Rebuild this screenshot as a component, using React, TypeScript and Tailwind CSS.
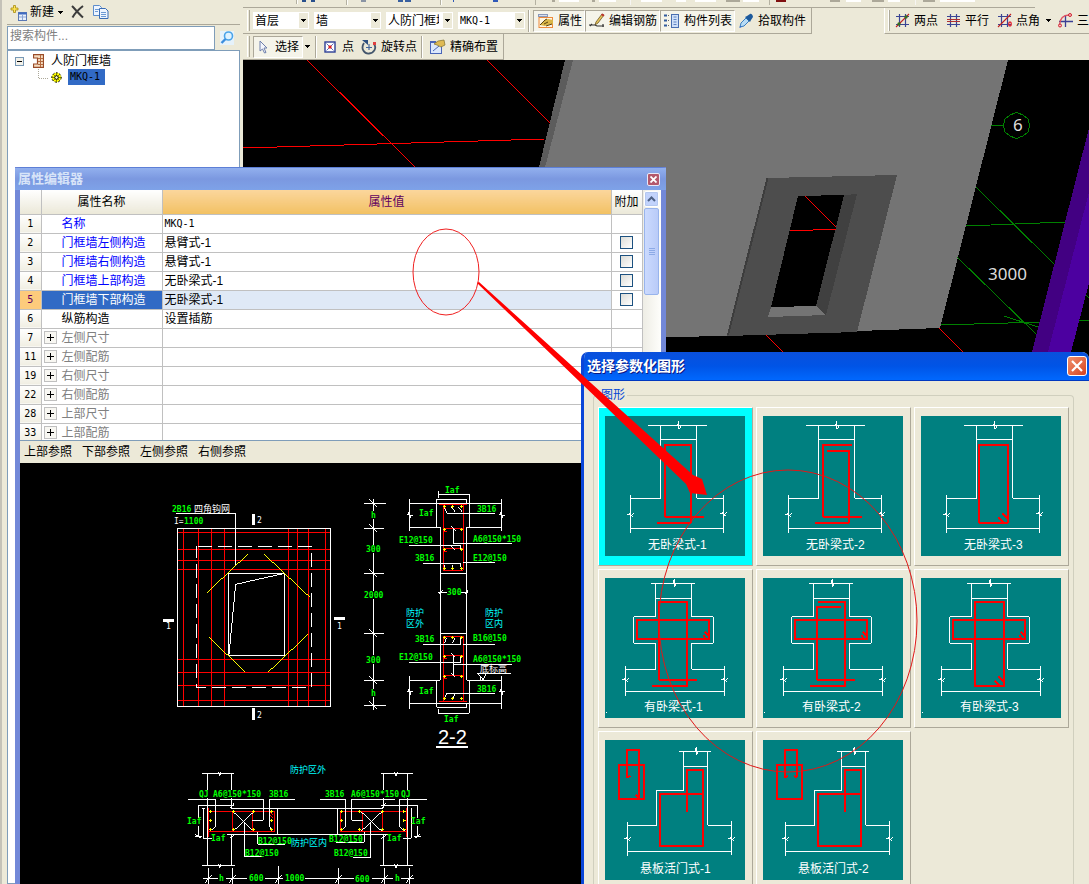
import React from "react";

type LabelSpec = [number, number, string, string?, number?];

const G = "#00ff00";
const W = "#ffffff";
const C = "#00ffff";

function DownArrow({ className = "" }: { className?: string }) {
  return (
    <svg className={className} width="5" height="3" viewBox="0 0 5 3" shapeRendering="crispEdges" aria-hidden="true">
      <path d="M0 0h5L2.5 3z" fill="#000" />
    </svg>
  );
}

function Combo({ label, value, width }: { label: string; value: string; width: string }) {
  const latin = /^[\x00-\x7f]+$/.test(value);
  return (
    <div className={`relative h-[17px] bg-white ${width}`}>
      <select
        aria-label={label}
        className={`h-[17px] w-full appearance-none overflow-hidden bg-transparent pr-[14px] pl-[2px] text-clip outline-none ${
          latin ? "font-['DejaVu_Sans_Mono'] text-[10px]" : "text-[12px] leading-[16px]"
        }`}
      >
        <option>{value}</option>
      </select>
      <div className="pointer-events-none absolute top-[1px] right-[1px] flex h-[15px] w-[9px] items-center justify-center bg-[#ece9d8]">
        <DownArrow />
      </div>
    </div>
  );
}

function Grip() {
  return <div className="mr-[3px] h-full w-[3px] border-r border-l border-r-[#aca899] border-l-white" />;
}

function Sep() {
  return <div className="mx-[3px] h-[22px] w-[2px] border-r border-l border-r-white border-l-[#aca899]" />;
}

function ToolButton({
  children,
  pressed = false,
  className = "",
}: {
  children: React.ReactNode;
  pressed?: boolean;
  className?: string;
}) {
  return (
    <button
      type="button"
      aria-pressed={pressed}
      className={`flex h-[22px] items-center gap-[4px] border whitespace-nowrap ${
        pressed
          ? "border-t-[#aca899] border-r-white border-b-white border-l-[#aca899] bg-[#f5f4ea]"
          : "border-transparent"
      } ${className}`}
    >
      {children}
    </button>
  );
}

function PropertyIcon() {
  return (
    <svg width="16" height="16" viewBox="0 0 16 16" aria-hidden="true">
      <rect x="0.5" y="1.5" width="9" height="2" fill="#d8e0f0" stroke="#8a98b8" />
      <rect x="1" y="4.5" width="13.5" height="10" fill="#fff6e0" stroke="#ee8a3c" />
      <path d="M2 12l5-5 3-1 5 1v4l-5 1-3 1z" fill="#d9b648" />
      <path d="M2 12l5-5 2-1M6 11l4-2M8 13l6-2" stroke="#5a4310" fill="none" />
    </svg>
  );
}

function PencilIcon() {
  return (
    <svg width="16" height="16" viewBox="0 0 16 16" aria-hidden="true">
      <path d="M7 9l6-8 2 1-6 8-3 2z" fill="#e8c65a" stroke="#6a5424" strokeWidth="0.8" />
      <path d="M12 2l1-1.500 2.500 1.500-1 1.500z" fill="#c03030" />
      <path d="M0 12h6l2 1h7M1 13l2-2M14 11v3" stroke="#333" fill="none" strokeWidth="1.200" />
    </svg>
  );
}

function ListIcon() {
  return (
    <svg width="16" height="16" viewBox="0 0 16 16" aria-hidden="true">
      <path d="M0 2.500h3M0 7.500h3M0 12.500h3" stroke="#315a9c" strokeWidth="2" />
      <path d="M4 2.500h2M4 7.500h2M4 12.500h2" stroke="#666" strokeDasharray="1 1" />
      <rect x="7.500" y="1.500" width="7" height="13" fill="#cfe0f8" stroke="#4a6fb0" />
      <path d="M9.500 4h3M9.500 6.500h3M9.500 9h3M9.500 11.500h3" stroke="#5f84c4" />
    </svg>
  );
}

function DropperIcon() {
  return (
    <svg width="16" height="16" viewBox="0 0 16 16" aria-hidden="true">
      <path d="M2 14l1-4 5-5 3 3-5 5z" fill="#b7dcf5" stroke="#3b7fc0" />
      <path d="M7 4l5 5 1-2 2-3c0-2-2-4-3-3L9 3z" fill="#1d5a9c" />
      <path d="M1 15l1.500-2 1 1z" fill="#2a5fd0" />
    </svg>
  );
}

function AxisIcon({ kind }: { kind: "two" | "parallel" | "angle" | "three" }) {
  if (kind === "three") {
    return (
      <svg width="15" height="15" viewBox="0 0 15 15" aria-hidden="true">
        <path d="M7.500 2v12M1 8.500h14" stroke="#3a3f94" strokeWidth="1.300" />
        <path d="M1.500 12C2 5 5 2 11 2" stroke="#e05060" fill="none" strokeWidth="1.300" />
        <circle cx="2" cy="12.500" r="1.500" fill="#f6c0c0" stroke="#d02030" />
        <circle cx="12" cy="2" r="1.500" fill="#f6c0c0" stroke="#d02030" />
      </svg>
    );
  }
  return (
    <svg width="15" height="15" viewBox="0 0 15 15" aria-hidden="true">
      <path d="M4.500 1v13M10.500 1v13M1 3.500h13M1 11.500h13" stroke="#3a4494" strokeWidth="1.200" />
      {kind === "parallel" && <path d="M1 6.500h13M1 8.500h13" stroke="#b03030" />}
      {kind !== "parallel" && <path d="M1 14L14 1" stroke="#c02020" strokeWidth="1.100" />}
      {kind === "two" && (
        <>
          <circle cx="4" cy="11" r="1.700" fill="#356f20" />
          <circle cx="11" cy="4" r="1.700" fill="#356f20" />
        </>
      )}
      {kind === "angle" && <ellipse cx="13" cy="11" rx="1.300" ry="2" fill="none" stroke="#e02030" strokeWidth="1.300" />}
    </svg>
  );
}

function LeftPanel() {
  return (
    <aside className="flex w-[243px] shrink-0 border-l-2 border-[#c4c2b8] pl-[5px]">
      <div className="flex w-[233px] flex-col">
        <div className="flex h-[25px] items-center border-b border-[#aca899] pl-[3px]">
          <button type="button" className="flex items-center gap-[3px]">
            <svg width="17" height="17" viewBox="0 0 17 17" aria-hidden="true">
              <path d="M3.500 1.500h2v2.500h2.500v2h-2.500v2.500h-2v-2.500H1v-2h2.500z" fill="#ffe858" stroke="#a88a10" strokeWidth="0.800" />
              <rect x="8.500" y="8.500" width="8" height="8" fill="#e8f0fc" stroke="#5a78b4" />
              <path d="M8.500 9.500h8" stroke="#3e6ac0" strokeWidth="2" />
              <path d="M9 13h7M12.500 11v5" stroke="#8aa4d4" />
            </svg>
            <span>新建</span>
            <DownArrow className="ml-[1px]" />
          </button>
          <button type="button" aria-label="删除" className="ml-[8px]">
            <svg width="14" height="14" viewBox="0 0 14 14" aria-hidden="true">
              <path d="M1 1c3 3 7 8 11 11.500M12 1C8 4 4 8 1.500 12.500" stroke="#3c3c3c" strokeWidth="2" fill="none" />
            </svg>
          </button>
          <button type="button" aria-label="复制" className="ml-[8px]">
            <svg width="16" height="14" viewBox="0 0 16 14" aria-hidden="true">
              <path d="M0.500 0.500h6l2 2v8h-8z" fill="#eef5ff" stroke="#5d8dcc" />
              <path d="M6.500 3.500h6l2.500 2.500v7.500h-8.500z" fill="#eef5ff" stroke="#3b6db4" />
              <path d="M2 4.500h4M2 6.500h3M8 7.500h5M8 9.500h5M8 11.500h5" stroke="#6c9ad4" />
            </svg>
          </button>
        </div>
        <div className="flex h-[25px] items-center gap-[5px] pt-[1px]">
          <input
            type="text"
            aria-label="搜索构件"
            placeholder="搜索构件..."
            className="h-[24px] w-[208px] border border-[#7f9db9] bg-white px-[2px] pb-[4px] text-[12px] outline-none placeholder:text-[#808080]"
          />
          <button type="button" aria-label="搜索" className="bg-[#e6f2fb]">
            <svg width="14" height="14" viewBox="0 0 14 14" aria-hidden="true">
              <circle cx="8.500" cy="5" r="4" fill="#dff2ff" stroke="#4aa3e8" strokeWidth="1.600" />
              <path d="M5.500 8L1.500 12" stroke="#3c8ede" strokeWidth="2.400" />
            </svg>
          </button>
        </div>
        <div className="flex-1 border border-[#7f9db9] bg-white pt-[2px] pl-[7px]">
          <div className="flex h-[16px] items-center">
            <svg width="9" height="9" viewBox="0 0 9 9" shapeRendering="crispEdges" aria-hidden="true">
              <rect x="0.500" y="0.500" width="8" height="8" fill="#f4f2ea" stroke="#7898b5" />
              <path d="M2 4.500h5" stroke="#000" />
            </svg>
            <svg className="ml-[9px]" width="11" height="14" viewBox="0 0 11 14" aria-hidden="true">
              <path d="M0.500 0.700h10v12.600h-10v-3.300h4V4h-4z" fill="#f5dcc0" stroke="#9a4c28" strokeWidth="1.200" />
              <path d="M7.500 1v12M5 4.500h5M5 7.500h5M5 10.500h5" stroke="#b46a40" />
            </svg>
            <span className="ml-[7px]">人防门框墙</span>
          </div>
          <div className="flex h-[16px] items-center pl-[23px]">
            <svg width="11" height="10" viewBox="0 0 11 10" className="mb-[6px]" shapeRendering="crispEdges" aria-hidden="true">
              <path d="M0.500 0v9.500h11" fill="none" stroke="#aca899" strokeDasharray="1 1" />
            </svg>
            <svg className="ml-[2px]" width="11" height="11" viewBox="0 0 11 11" aria-hidden="true">
              <circle cx="5.500" cy="5.500" r="4.700" fill="#ffff00" stroke="#222" strokeDasharray="2 1.500" />
              <path d="M5.500 0v11M0 5.500h11M2 2l7 7M9 2L2 9" stroke="#555500" strokeWidth="0.700" />
              <circle cx="5.500" cy="5.500" r="1.800" fill="#ffffd0" stroke="#000" />
            </svg>
            <span className="ml-[6px] h-[16px] w-[37px] bg-[#316ac5] pl-[2px] font-['DejaVu_Sans_Mono'] text-[10px] leading-[16px]">
              MKQ-1
            </span>
          </div>
        </div>
      </div>
      <div className="w-[3px]" />
    </aside>
  );
}

function Toolbars() {
  return (
    <div className="flex flex-col">
      <div className="flex h-[8px]">
        <svg className="w-[792px] shrink-0 border-b border-[#aca899]" width="792" height="8" viewBox="0 0 792 8" shapeRendering="crispEdges" aria-hidden="true">
          <path d="M4.500 0v5M61.500 0v6M169.500 0v6M277.500 0v6M386.500 0v6M545.500 0v6M711.500 0v6" stroke="#aca899" />
          <path d="M5.500 0v5M62.500 0v6M170.500 0v6M386.500 0v6M712.500 0v6" stroke="#fff" />
          <path d="M11 0h4v2h-4zM21 0h5v2h-5z" fill="#28508c" />
          <path d="M78 0h6v2h-6z" fill="#8a94a4" />
          <path d="M120 0h6v2h-6zM128 0h7v2h-7z" fill="#3860a0" />
          <path d="M183 0h2v2h-2zM229 0h6v2h-6z" fill="#2e58b8" />
          <path d="M297 0h3v2h-3zM342 0h4v2h-4zM495 0h16v2h-16zM614 0h12v2h-12zM662 0h14v2h-14zM720 0h14v2h-14z" fill="#aca899" />
          <path d="M305 0h22v2h-22zM350 0h20v2h-20zM398 0h24v2h-24zM438 0h12v2h-12zM460 0h24v2h-24zM515 0h18v2h-18zM632 0h18v2h-18zM680 0h14v2h-14zM740 0h40v2h-40z" fill="#fff" />
          <path d="M553 0h11v2h-11z" fill="#801010" />
        </svg>
      </div>
      <div className="flex h-[26px] justify-between">
        <div className="flex h-[26px] shrink-0 items-center border-r border-b border-[#aca899] py-[2px] pr-[2px] pl-[4px]">
          <Grip />
          <div className="flex items-center gap-[5px]">
            <Combo label="楼层" value="首层" width="w-[56px]" />
            <Combo label="类型" value="墙" width="w-[67px]" />
            <Combo label="构件类型" value="人防门框墙" width="w-[67px]" />
            <Combo label="构件" value="MKQ-1" width="w-[67px]" />
          </div>
          <Sep />
          <ToolButton pressed className="w-[52px] pl-[4px]">
            <PropertyIcon />
            <span>属性</span>
          </ToolButton>
          <ToolButton pressed className="w-[75px] pl-[3px]">
            <PencilIcon />
            <span>编辑钢筋</span>
          </ToolButton>
          <ToolButton pressed className="w-[75px] pl-[3px]">
            <ListIcon />
            <span>构件列表</span>
          </ToolButton>
          <ToolButton className="w-[74px] pl-[2px]">
            <DropperIcon />
            <span>拾取构件</span>
          </ToolButton>
        </div>
        <div className="flex h-[26px] w-[205px] items-center overflow-hidden border-b border-l border-b-[#aca899] border-l-white py-[2px] pl-[3px]">
          <Grip />
          <button type="button" className="ml-[2px] flex shrink-0 items-center gap-[4px]">
            <AxisIcon kind="two" />
            <span>两点</span>
          </button>
          <button type="button" className="ml-[8px] flex shrink-0 items-center gap-[4px]">
            <AxisIcon kind="parallel" />
            <span>平行</span>
          </button>
          <button type="button" className="ml-[8px] flex shrink-0 items-center gap-[4px]">
            <AxisIcon kind="angle" />
            <span>点角</span>
            <DownArrow className="ml-[2px]" />
          </button>
          <button type="button" className="ml-[7px] flex shrink-0 items-center gap-[4px]">
            <AxisIcon kind="three" />
            <span>三</span>
          </button>
        </div>
      </div>
      <div className="flex h-[26px]">
        <div className="flex h-[26px] items-center border-r border-b border-[#aca899] py-[2px] pr-[4px] pl-[4px]">
          <Grip />
          <ToolButton pressed className="w-[50px] pl-[3px]">
            <svg width="14" height="14" viewBox="0 0 14 14" aria-hidden="true">
              <path d="M3 1l7 7H7l2 4.500-1.500.5L5.500 9 3 11z" fill="#f4f6fc" stroke="#6f80ac" />
            </svg>
            <span>选择</span>
          </ToolButton>
          <DownArrow className="mr-[2px] ml-[2px]" />
          <Sep />
          <ToolButton className="gap-[6px] pl-[3px]">
            <svg width="12" height="12" viewBox="0 0 12 12" aria-hidden="true">
              <rect x="1" y="1" width="10" height="10" fill="#fff" stroke="#2d3e96" strokeWidth="1.400" />
              <path d="M2.500 2.500l7 7M9.500 2.500l-7 7" stroke="#5a6cc0" />
              <rect x="4.500" y="4.500" width="3" height="3" fill="#e02020" />
            </svg>
            <span>点</span>
          </ToolButton>
          <ToolButton className="pl-[5px]">
            <svg width="16" height="16" viewBox="0 0 16 16" aria-hidden="true">
              <path d="M3 4C-1 10 4 15 8 14.500 13 14 16 9 13 5" fill="none" stroke="#44566c" strokeWidth="1.800" />
              <path d="M1 1h6v5z" fill="#2d4f80" />
              <path d="M8 5v6M5 8.500h6" stroke="#44669c" strokeWidth="1.200" />
              <rect x="12" y="3" width="3" height="3" fill="#e04040" />
            </svg>
            <span>旋转点</span>
          </ToolButton>
          <Sep />
          <ToolButton className="pl-[3px]">
            <svg width="16" height="16" viewBox="0 0 16 16" aria-hidden="true">
              <rect x="0.500" y="3.500" width="11" height="11" fill="#dce8fc" stroke="#4a66b8" />
              <path d="M0 3h6" stroke="#4a66b8" strokeWidth="2" />
              <path d="M3 12l6-5" stroke="#4a66b8" />
              <path d="M4 5l4-3 6-1 1 5-4 2-4-2z" fill="#dfba54" stroke="#80702c" strokeWidth="0.700" />
            </svg>
            <span>精确布置</span>
          </ToolButton>
        </div>
      </div>
    </div>
  );
}

function Scene() {
  return (
    <svg className="block h-full w-full bg-black" viewBox="243 60 846 824" preserveAspectRatio="xMinYMin slice" shapeRendering="crispEdges" role="img" aria-label="三维视图">
      <g stroke="#ff0000" fill="none">
        <path d="M307 60L415 167M487 60L551 124M243 148L545 139" />
        <path d="M766 335l17 17M939 328l24 24" />
      </g>
      <polygon points="565,60 573,60 547,168 505,340 497,340" fill="#5c5c5c" />
      <polygon points="573,60 1008,60 940,328 858,331 727,336 500,340" fill="#747474" />
      <polygon points="767,178 897,175 857,332 727,336" fill="#4d4d4d" />
      <path d="M767.500 178L728 335" stroke="#3d3d3d" strokeWidth="2" />
      <polygon points="798,196 844,195 816,306 771,307" fill="#000" />
      <polygon points="844,195 857,194 826,315 816,306" fill="#404040" />
      <polygon points="771,307 816,306 826,315 768,317" fill="#747474" />
      <path d="M805 196l31 31M790 231l46-2" stroke="#ff0000" />
      <g stroke="#008000" fill="none">
        <path d="M976 187l78 77M966 226l99-4M957 257l80 78M941 325l100-3M1004 316l34 11M1078 320h11M1085 294l4 4" />
        <path d="M991 125.500h13" />
        <polygon points="1016.500,112.500 1023,115 1028,119 1029.500,125.500 1028,132 1023,136 1016.500,138.500 1010,136 1005,132 1003.500,125.500 1005,119 1010,115" />
      </g>
      <polygon points="1089,128 1089,194 1048,352 1032,352" fill="#420082" />
      <polygon points="1089,192 1089,283 1071,352 1048,352" fill="#4c00a0" />
      <g fill="#dcdcdc" fontFamily="'Noto Sans', sans-serif" fontSize="17">
        <text x="1013" y="131">6</text>
        <text x="988" y="280">3000</text>
      </g>
    </svg>
  );
}

const greenLabels: LabelSpec[] = [
  [172, 512, "2B16"],
  [184, 524, "1100"],
  [445, 493, "Iaf"],
  [371, 518, "h"],
  [419, 516, "Iaf"],
  [477, 512, "3B16"],
  [366, 552, "300"],
  [399, 543, "E12@150"],
  [473, 542, "A6@150*150"],
  [415, 561, "3B16"],
  [473, 561, "E12@150"],
  [364, 598, "2000"],
  [447, 595, "300"],
  [415, 642, "3B16"],
  [473, 641, "B16@150"],
  [366, 663, "300"],
  [399, 660, "E12@150"],
  [473, 662, "A6@150*150"],
  [371, 696, "h"],
  [419, 694, "Iaf"],
  [477, 692, "3B16"],
  [444, 722, "Iaf"],
  [199, 797, "QJ"],
  [213, 797, "A6@150*150"],
  [269, 797, "3B16"],
  [325, 797, "3B16"],
  [351, 797, "A6@150*150"],
  [401, 797, "QJ"],
  [187, 824, "Iaf"],
  [411, 824, "Iaf"],
  [211, 841, "Iaf"],
  [387, 841, "Iaf"],
  [258, 844, "B12@150"],
  [329, 842, "B12@150"],
  [245, 856, "B12@150"],
  [334, 856, "B12@150"],
  [219, 881, "h"],
  [249, 881, "600"],
  [285, 881, "1000"],
  [355, 882, "600"],
  [395, 881, "h"],
];

const otherLabels: LabelSpec[] = [
  [194, 512, "四角钩网", W, 9],
  [174, 524, "I=", W, 8],
  [257, 523, "2", W, 8],
  [257, 718, "2", W, 8],
  [166, 629, "1", W, 8],
  [337, 629, "1", W, 8],
  [406, 616, "防护", C, 9],
  [406, 627, "区外", C, 9],
  [485, 616, "防护", C, 9],
  [485, 627, "区内", C, 9],
  [480, 672, "底标高", W, 9],
  [290, 773, "防护区外", C, 9],
  [291, 846, "防护区内", C, 9],
];

const dots = (points: number[][]) => points.map(([x, y]) => `M${x - 4} ${y}h9M${x} ${y - 4}v9`).join("");

function Drawing() {
  return (
    <svg className="block bg-black" width="641" height="421" viewBox="20 463 641 421" role="img" aria-label="配筋参照图">
      <g transform="translate(150 480) scale(0.333333)" fill="none" strokeWidth="3" shapeRendering="crispEdges">
        <path
          stroke="#ff0000"
          d="M82 157H542M82 208H542M82 241H542M82 268H542M82 538H542M82 577H542M82 616H542M82 661H542M100 145V680M145 145V680M184 145V680M223 145V680M415 145V680M442 145V680M475 145V680M526 145V680"
        />
        <path stroke={W} d="M82 145H542V680H82ZM235 280H404V526H235ZM237 523L257 313L404 280M78 100H257V257" />
        <path stroke={W} strokeDasharray="42 18" d="M145 199H485V623H139V199" />
        <path stroke="#ffff00" d="M171 338L293 223M343 223L480 352M178 472L285 576M355 576L474 463" />
        <path fill={W} d="M306 102h9v33h-9zM306 684h9v36h-9zM39 417h33v9h-33zM552 411h33v9h-33z" />
      </g>
      <g transform="translate(350 480) scale(0.333333)" fill="none" strokeWidth="3" shapeRendering="crispEdges">
        <path stroke="#ff0000" d="M280 73V271H340V73M268 73H350M280 145H340M280 205H340M280 664V469H340V664M268 666H350M280 526H340M280 586H340M280 80l8 8M280 154h12M280 214h12M280 535h12M280 595h12" />
        <path
          stroke={W}
          d="M70 57V92M70 118V194M70 220V332M70 358V526M70 552V626M70 652V690M42 70H108M42 145H102M42 280H102M42 460H102M42 601H102M42 676H108M58 58L80 80M58 133L80 155M58 268L80 290M58 448L80 470M58 589L80 611M58 664L80 686"
        />
        <path
          stroke={W}
          d="M178 57V152M454 57V152M178 70H454M178 142H271V601H178M454 142H350V601H454M260 142V58H350V70M265 34V54M265 43H358V142M271 280H350M271 460H350M178 588V686M454 588V686M178 670H454M260 601V682H350V670M358 601V700H265V688M170 105h8l-4-8 8 18-2-9h8M446 105h8l-4-8 8 18-2-9h8M170 634h8l-4-8 8 18-2-9h8M446 634h8l-4-8 8 18-2-9h8"
        />
        <path
          stroke={W}
          d="M435 100H290L283 80M304 80L316 97M325 80L337 97M485 190H310V145M304 139L316 152M304 199L316 211M178 196H332V206M219 250H332V262M340 247H435M265 337H290M334 337H354M265 343L277 331M344 343L354 331M271 337V343M219 493H332V475M340 493H435M178 547H332V532M485 553H310V526M310 553V586M304 520L316 532M304 580L316 592M435 640H290L283 655M316 640L308 655M382 580H483M385 582L400 600L408 582M392 588V601M283 254v15M308 254v15M283 490l6-16M308 490l6-16"
        />
        <path stroke="#ffff00" d={dots([[283, 79], [307, 79], [334, 79], [283, 148], [334, 148], [283, 208], [334, 208], [283, 265], [307, 265], [334, 265], [283, 472], [307, 472], [334, 472], [283, 530], [334, 530], [283, 589], [334, 589], [283, 655], [307, 655], [334, 655]])} />
        <path stroke={W} strokeWidth="6" d="M258 801H354" />
      </g>
      <g transform="translate(170 755) scale(0.333333)" fill="none" strokeWidth="3" shapeRendering="crispEdges">
        <path stroke="#ff0000" d="M116 169H314V230H116ZM116 160V245M188 169V230M247 169V230M709 169H511V230H709ZM709 160V245M637 169V230M578 169V230M296 169l14 10M300 180l10 10" />
        <path
          stroke={W}
          d="M97 55H191M634 55H728M112 55V105M112 128V331M184 55V105M184 128V160M640 55V105M640 128V160M712 55V105M712 128V331M184 160H640M172 238H653M322 160V238M502 160V238M184 238V331M640 238V331M97 331H194M631 331H728M143 50l6 12 4-12M672 50l6 12 4-12M143 326l6 12 4-12M672 326l6 12 4-12"
        />
        <path
          stroke={W}
          d="M54 133H137V215L120 228M150 133H280V196H247M375 133H299V215L306 228M188 169L253 230M188 230L253 169M223 200V304H276M263 230V268H345M771 133H688V215L705 228M675 133H545V196H578M450 133H526V215L513 228M637 169L572 230M637 230L572 169M602 200V307H549M583 230V262H498M191 151H85V190M85 212V244M76 244H97M634 151H743V190M743 212V244M752 244H731M100 160V250H125M724 160V250H700M97 160H106M76 238L94 250M180 160L192 145M180 250L192 240M634 160L648 145M634 250L648 240M735 250L750 238"
        />
        <path stroke={W} d="M100 370H145M167 370H230M285 370H340M406 370H552M605 370H670M694 370H732M115 340V387M187 340V387M325 334V387M505 340V387M643 340V387M718 340V387M104 384L126 360M176 384L198 360M314 384L336 360M494 384L516 360M632 384L654 360M707 384L729 360" />
        <path stroke="#ffff00" d={dots([[122, 169], [122, 196], [122, 223], [190, 169], [190, 223], [251, 169], [251, 223], [304, 169], [304, 196], [304, 223], [515, 169], [515, 196], [515, 223], [569, 169], [569, 223], [637, 169], [637, 223], [702, 169], [702, 196], [702, 223]])} />
      </g>
      <g fontFamily="'DejaVu Sans Mono', 'Noto Sans CJK SC', monospace">
        {greenLabels.map(([x, y, text], i) => (
          <text key={i} x={x} y={y} fill={G} fontSize="8" fontWeight="bold">
            {text}
          </text>
        ))}
        {otherLabels.map(([x, y, text, fill, size], i) => (
          <text key={i} x={x} y={y} fill={fill} fontSize={size}>
            {text}
          </text>
        ))}
      </g>
      <text x="438" y="744" fill={W} fontSize="20" fontFamily="'Liberation Sans', sans-serif">
        2-2
      </text>
    </svg>
  );
}

type Row = { n: number; name: string; value?: string; kind: "blue" | "plain" | "group"; check?: boolean; active?: boolean };

const rows: Row[] = [
  { n: 1, name: "名称", value: "MKQ-1", kind: "blue" },
  { n: 2, name: "门框墙左侧构造", value: "悬臂式-1", kind: "blue", check: true },
  { n: 3, name: "门框墙右侧构造", value: "悬臂式-1", kind: "blue", check: true },
  { n: 4, name: "门框墙上部构造", value: "无卧梁式-1", kind: "blue", check: true },
  { n: 5, name: "门框墙下部构造", value: "无卧梁式-1", kind: "blue", check: true, active: true },
  { n: 6, name: "纵筋构造", value: "设置插筋", kind: "plain" },
  { n: 7, name: "左侧尺寸", kind: "group" },
  { n: 11, name: "左侧配筋", kind: "group" },
  { n: 19, name: "右侧尺寸", kind: "group" },
  { n: 22, name: "右侧配筋", kind: "group" },
  { n: 28, name: "上部尺寸", kind: "group" },
  { n: 33, name: "上部配筋", kind: "group" },
];

const nameColor = { blue: "text-[#0000ff]", plain: "text-black", group: "text-[#808080]" };

function PropertyEditor() {
  return (
    <section className="absolute top-[167px] bottom-0 left-[15px] flex w-[651px] flex-col border-x-[5px] border-t border-[#7288d8] border-t-[#5d7fd6] bg-[#ece9d8]">
      <header className="-mx-[5px] flex h-[22px] shrink-0 items-center justify-between bg-linear-to-b from-[#92b0ee] via-[#7b98e0] to-[#7ea2e8] pr-[6px] pl-[3px]">
        <h2 className="text-[13px] font-bold text-[#d8e4f8]">属性编辑器</h2>
        <button type="button" aria-label="关闭" className="flex h-[13px] w-[13px] items-center justify-center rounded-[2px] border border-[#e8e8f8] bg-[#b4586c]">
          <svg width="7" height="7" viewBox="0 0 7 7" aria-hidden="true">
            <path d="M0.500 0.500l6 6M6.500 0.500l-6 6" stroke="#fff" strokeWidth="1.800" />
          </svg>
        </button>
      </header>
      <div className="flex h-[251px] shrink-0 overflow-hidden border-b border-[#7f9db9] bg-white">
        <table className="w-[622px] table-fixed border-collapse">
          <colgroup>
            <col className="w-[21px]" />
            <col className="w-[121px]" />
            <col className="w-[449px]" />
            <col className="w-[31px]" />
          </colgroup>
          <thead>
            <tr className="h-[24px] border-b border-[#c0c0c0]">
              <th aria-label="序号" className="border-r border-[#c0c0c0] bg-linear-to-b from-white to-[#ebe8d8]" />
              <th className="border-r border-[#c0c0c0] bg-linear-to-b from-white to-[#ebe8d8] p-0 font-normal">属性名称</th>
              <th className="border-r border-[#c0c0c0] bg-linear-to-b from-[#fbd69c] to-[#f2c162] p-0 font-normal text-[#600060]">属性值</th>
              <th className="border-r border-[#c0c0c0] bg-linear-to-b from-white to-[#ebe8d8] p-0 font-normal whitespace-nowrap">附加</th>
            </tr>
          </thead>
          <tbody>
            {rows.map((r) => (
              <tr key={r.n} className="h-[19px] border-b border-[#c0c0c0] leading-[18px]">
                <td
                  className={`border-r border-[#c0c0c0] p-0 text-center font-['DejaVu_Sans_Mono'] text-[10px] ${
                    r.active ? "bg-[#fdcb7c] text-[#600060]" : "bg-linear-to-b from-white to-[#f0eee2]"
                  }`}
                >
                  {r.n}
                </td>
                <td className={`border-r border-[#c0c0c0] p-0 ${r.active ? "bg-[#316ac5] text-white" : nameColor[r.kind]}`}>
                  <div className="flex h-[18px] items-center">
                    <span className="flex w-[20px] justify-start pl-[2px]">
                      {r.kind === "group" && (
                        <button type="button" aria-label={`展开 ${r.name}`} className="flex h-[13px] w-[13px] items-center justify-center border border-[#c0c0c0] bg-[#f8f7f2]">
                          <svg width="7" height="7" viewBox="0 0 7 7" shapeRendering="crispEdges" aria-hidden="true">
                            <path d="M0 3.500h7M3.500 0v7" stroke="#000" />
                          </svg>
                        </button>
                      )}
                    </span>
                    <span>{r.name}</span>
                  </div>
                </td>
                <td
                  className={`border-r border-[#c0c0c0] py-0 pr-0 pl-[2px] ${r.active ? "bg-[#dfe9f6]" : ""} ${
                    r.n === 1 ? "font-['DejaVu_Sans_Mono'] text-[10px]" : ""
                  }`}
                >
                  {r.value}
                </td>
                <td className="border-r border-[#c0c0c0] p-0">
                  {r.check && (
                    <input
                      type="checkbox"
                      aria-label={`${r.name} 附加`}
                      className="mx-auto block h-[13px] w-[13px] appearance-none border border-[#1c5180] bg-linear-to-br from-[#dcdcd7] to-white"
                    />
                  )}
                </td>
              </tr>
            ))}
          </tbody>
        </table>
        <div className="flex w-[19px] flex-col items-center gap-[1px] bg-linear-to-r from-[#eeede5] to-[#fefefb] pt-[1px]">
          <button type="button" aria-label="向上滚动" className="flex h-[16px] w-[15px] items-center justify-center rounded-[2px] border border-white bg-[#c2d3fc] ring-1 ring-[#b4c8f0] ring-inset">
            <svg width="9" height="6" viewBox="0 0 9 6" aria-hidden="true">
              <path d="M1 5l3.500-3.500L8 5" fill="none" stroke="#4d6185" strokeWidth="2" />
            </svg>
          </button>
          <div className="flex h-[87px] w-[15px] flex-col items-center justify-center gap-[1px] rounded-[2px] border border-[#98b4ec] bg-linear-to-r from-[#cbdafe] to-[#b9cbf8]">
            <div className="h-px w-[6px] bg-[#8caae6]" />
            <div className="h-px w-[6px] bg-[#8caae6]" />
            <div className="h-px w-[6px] bg-[#8caae6]" />
            <div className="h-px w-[6px] bg-[#8caae6]" />
          </div>
        </div>
      </div>
      <nav className="flex h-[22px] shrink-0 items-center gap-[10px] pl-[4px]">
        {["上部参照", "下部参照", "左侧参照", "右侧参照"].map((t) => (
          <button type="button" key={t}>
            {t}
          </button>
        ))}
      </nav>
      <div className="min-h-0 flex-1 overflow-hidden bg-black">
        <Drawing />
      </div>
    </section>
  );
}

const brk = (x: number, y: number) => `M${x - 10} ${y}h7l5-12v24l7-12h8`;
const sideBrk = (x: number, y: number) => `M${x - 10} ${y}h6l4-10M${x} ${y + 8}l6-10h5M${x - 6} ${y - 2}l12 8`;

const outlines = {
  plain: {
    x: 43,
    d: `M129 28H306M167 28V247H77M275 28V247H356M167 72H275M77 237V350M356 237V350M77 337H356${brk(220, 28)}${sideBrk(77, 295)}${sideBrk(356, 293)}`,
  },
  beam: {
    x: 39,
    d: `M138 16H270M152 16V116H86V196H152V274H62M260 16V116H325V196H260V274H359M152 61H260M62 264V354M359 264V354M62 340H359M4 403h3${brk(206, 16)}${sideBrk(62, 304)}${sideBrk(359, 304)}`,
  },
  cantilever: {
    x: 35,
    d: `M222 34H317M236 34V151H155V256H68M308 34V256H380M236 79H308M68 246V347M380 243V345M68 335H380${brk(272, 34)}${sideBrk(68, 295)}${sideBrk(380, 295)}`,
  },
};

const beamBar = "M95 126H313V183H95ZM312 174L299 162M304 183L294 172";

type Shape = { label: string; outline: keyof typeof outlines; bars: string; selected?: boolean };

const shapes: Shape[] = [
  { label: "无卧梁式-1", outline: "plain", selected: true, bars: "M297 302H180V87H258V320H157" },
  { label: "无卧梁式-2", outline: "plain", bars: "M267 87H180V302H297M192 104H258V320H157" },
  { label: "无卧梁式-3", outline: "plain", bars: "M174 87H261V320H174ZM260 308L244 292M248 320L232 304" },
  { label: "有卧梁式-1", outline: "beam", bars: `M276 305H162V72H246V324H141${beamBar}` },
  { label: "有卧梁式-2", outline: "beam", bars: `M165 72H246V324H141M234 87H162V305H276${beamBar}` },
  { label: "有卧梁式-3", outline: "beam", bars: `M162 72H249V324H162ZM248 312L232 296M236 324L222 308${beamBar}` },
  {
    label: "悬板活门式-1",
    outline: "cantilever",
    bars: "M245 215V90H294V318H165V162H294M41 75H118V176H41ZM103 176V30H66V112L76 108M100 172L93 164",
  },
  {
    label: "悬板活门式-2",
    outline: "cantilever",
    bars: "M245 215V90H294V318H165V162H294M41 75H118V176H41ZM103 112V30H65V112L75 108M103 112L93 108",
  },
];

function ShapeCard({ label, outline, bars, selected }: Shape) {
  const o = outlines[outline];
  return (
    <button
      type="button"
      aria-pressed={!!selected}
      className={`flex h-[159px] w-[155px] items-start border border-t-white border-r-[#aca899] border-b-[#aca899] border-l-white pt-[8px] pl-[6px] ${
        selected ? "bg-[#00ffff]" : "bg-[#ece9d8]"
      }`}
    >
      <svg width="140" height="140" viewBox="0 0 140 140" className="bg-[#008080]">
        <g transform="scale(0.333333)" fill="none">
          <path d={o.d} stroke="#fff" strokeWidth="3" shapeRendering="crispEdges" />
          <path d={bars} stroke="#ff0000" strokeWidth="6" strokeLinejoin="round" shapeRendering="crispEdges" />
        </g>
        <text x={o.x} y="133" fill="#fff" fontSize="12">
          {label}
        </text>
      </svg>
    </button>
  );
}

function ShapeDialog() {
  return (
    <section
      role="dialog"
      aria-label="选择参数化图形"
      className="absolute top-[352px] right-0 bottom-0 left-[581px] flex flex-col overflow-hidden rounded-t-[7px] border-l-[3px] border-[#0a46d8] bg-[#ece9d8]"
    >
      <header className="-ml-[3px] flex h-[29px] shrink-0 items-center justify-between border-b border-[#0038c0] bg-linear-to-b from-[#0a50dc] via-[#0054e6] to-[#0068fe] pr-[2px] pl-[6px]">
        <h2 className="text-[14px] font-bold text-white [text-shadow:1px_1px_0_#0a1883]">选择参数化图形</h2>
        <button type="button" aria-label="关闭" className="flex h-[20px] w-[20px] items-center justify-center rounded-[3px] border border-white bg-linear-to-br from-[#f0906c] to-[#d4401c]">
          <svg width="12" height="12" viewBox="0 0 12 12" aria-hidden="true">
            <path d="M1 1l10 10M11 1L1 11" stroke="#fff" strokeWidth="2.200" />
          </svg>
        </button>
      </header>
      <fieldset className="mt-[7px] mr-[15px] ml-[9px] flex-1 rounded-t-[4px] border border-b-0 border-[#d0cfbe] pl-[4px]">
        <legend className="ml-[1px] h-[15px] px-[2px] leading-[15px] text-[#0046d5]">图形</legend>
        <div className="mt-[4px] flex flex-wrap gap-[3px]">
          {shapes.map((s) => (
            <ShapeCard key={s.label} {...s} />
          ))}
        </div>
      </fieldset>
    </section>
  );
}

function Annotations() {
  return (
    <svg className="pointer-events-none absolute top-0 left-0" width="1089" height="884" viewBox="0 0 1089 884" aria-hidden="true">
      <ellipse cx="446" cy="272" rx="33" ry="43" fill="none" stroke="#f02020" />
      <ellipse cx="788" cy="621" rx="129" ry="151" fill="none" stroke="#e01818" />
      <polygon points="477,283 479,282 693,475 702,479 707,495 690,493 686,484" fill="#ff0000" />
    </svg>
  );
}

export default function App() {
  return (
    <div className="relative flex h-screen w-full overflow-hidden bg-[#ece9d8] font-['Liberation_Sans','Noto_Sans_CJK_SC',sans-serif] text-[12px] leading-[16px] text-black">
      <LeftPanel />
      <main className="flex min-w-0 flex-1 flex-col">
        <Toolbars />
        <div className="min-h-0 flex-1 overflow-hidden">
          <Scene />
        </div>
      </main>
      <PropertyEditor />
      <ShapeDialog />
      <Annotations />
    </div>
  );
}
